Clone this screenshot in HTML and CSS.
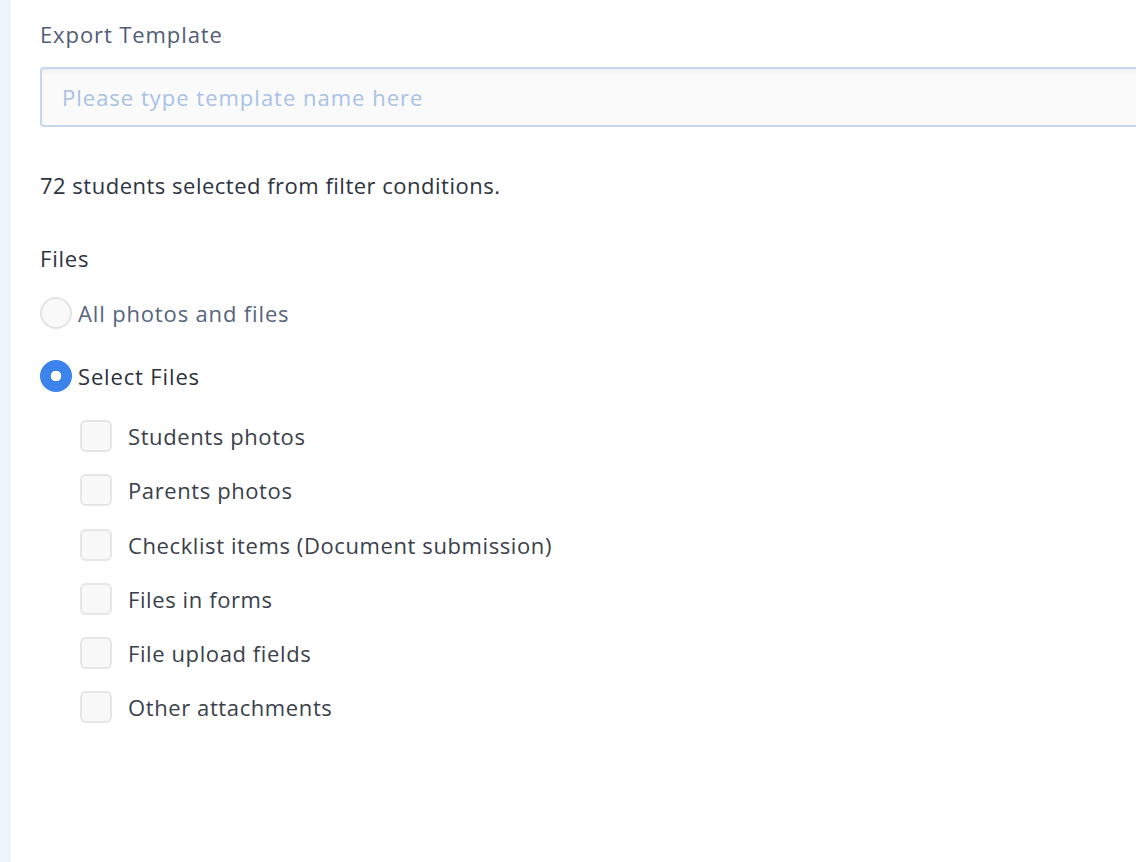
FILE: index.html
```html
<!DOCTYPE html>
<html>
<head>
<meta charset="utf-8">
<link rel="stylesheet" href="styles.css">
</head>
<body>
<div class="page">
  <div class="rail"></div>
  <main class="content">
    <label class="field-label">Export Template</label>
    <input class="text-input" type="text" placeholder="Please type template name here">
    <p class="summary">72 students selected from filter conditions.</p>
    <div class="section-title">Files</div>
    <div class="radio-row">
      <span class="radio"></span>
      <span class="radio-label muted">All photos and files</span>
    </div>
    <div class="radio-row">
      <span class="radio checked"></span>
      <span class="radio-label">Select Files</span>
    </div>
    <ul class="checks">
      <li class="check-row"><span class="checkbox"></span><span class="check-label">Students photos</span></li>
      <li class="check-row"><span class="checkbox"></span><span class="check-label">Parents photos</span></li>
      <li class="check-row"><span class="checkbox"></span><span class="check-label">Checklist items (Document submission)</span></li>
      <li class="check-row"><span class="checkbox"></span><span class="check-label">Files in forms</span></li>
      <li class="check-row"><span class="checkbox"></span><span class="check-label">File upload fields</span></li>
      <li class="check-row"><span class="checkbox"></span><span class="check-label">Other attachments</span></li>
    </ul>
  </main>
</div>
</body>
</html>
```

FILE: styles.css
```css
html, body {
  margin: 0;
  padding: 0;
  background: #ffffff;
}
body {
  font-family: "Open Sans", "Noto Sans", sans-serif;
  color: #2b303b;
}
.page {
  display: flex;
  min-height: 862px;
  overflow: hidden;
}
.rail {
  width: 10px;
  flex: 0 0 10px;
  background: #eef4fd;
  border-right: 1px solid #e4ecf8;
  box-sizing: border-box;
}
.content {
  flex: 1;
  padding: 19px 0 0 30px;
  min-width: 0;
}
.field-label {
  display: block;
  font-size: 22px;
  line-height: 30px;
  letter-spacing: 0.9px;
  color: #4f5d78;
}
.text-input {
  display: block;
  box-sizing: border-box;
  width: 1120px;
  height: 60px;
  margin-top: 18px;
  border: 2px solid #c5d7ef;
  border-radius: 4px;
  background: #fafafa;
  box-shadow: inset 0 3px 4px rgba(0,0,0,0.04);
  padding: 0 20px;
  font-family: inherit;
  font-size: 22px;
  letter-spacing: 1px;
  color: #2b303b;
  outline: none;
}
.text-input::placeholder {
  color: #a9c2e3;
}
.summary {
  margin: 43px 0 0;
  font-size: 22px;
  line-height: 30px;
  letter-spacing: 0.5px;
  color: #2d3340;
}
.section-title {
  margin-top: 43px;
  font-size: 22px;
  line-height: 30px;
  letter-spacing: 0.8px;
  color: #2d3340;
}
.radio-row {
  display: flex;
  align-items: center;
  gap: 6px;
  height: 32px;
  margin-top: 24px;
}
.radio-row + .radio-row {
  margin-top: 31px;
}
.radio {
  box-sizing: border-box;
  width: 32px;
  height: 32px;
  border-radius: 50%;
  border: 2px solid #e3e3e3;
  background: #f9f9f9;
  flex: 0 0 32px;
}
.radio.checked {
  border: none;
  background: radial-gradient(circle, #ffffff 0 5px, #3c83ee 5.6px);
}
.radio-label {
  font-size: 22px;
  letter-spacing: 0.85px;
  color: #2b303b;
}
.radio-label.muted {
  color: #56647e;
}
.checks {
  list-style: none;
  margin: 28px 0 0;
  padding: 0 0 0 40px;
  display: flex;
  flex-direction: column;
  gap: 22.3px;
}
.check-row {
  display: flex;
  align-items: center;
  gap: 16px;
  height: 32px;
}
.checkbox {
  box-sizing: border-box;
  width: 32px;
  height: 32px;
  flex: 0 0 32px;
  border: 2px solid #e6e6e6;
  border-radius: 6px;
  background: #f8f8f8;
}
.check-label {
  font-size: 22px;
  letter-spacing: 0.6px;
  color: #3a3f4b;
}
```
